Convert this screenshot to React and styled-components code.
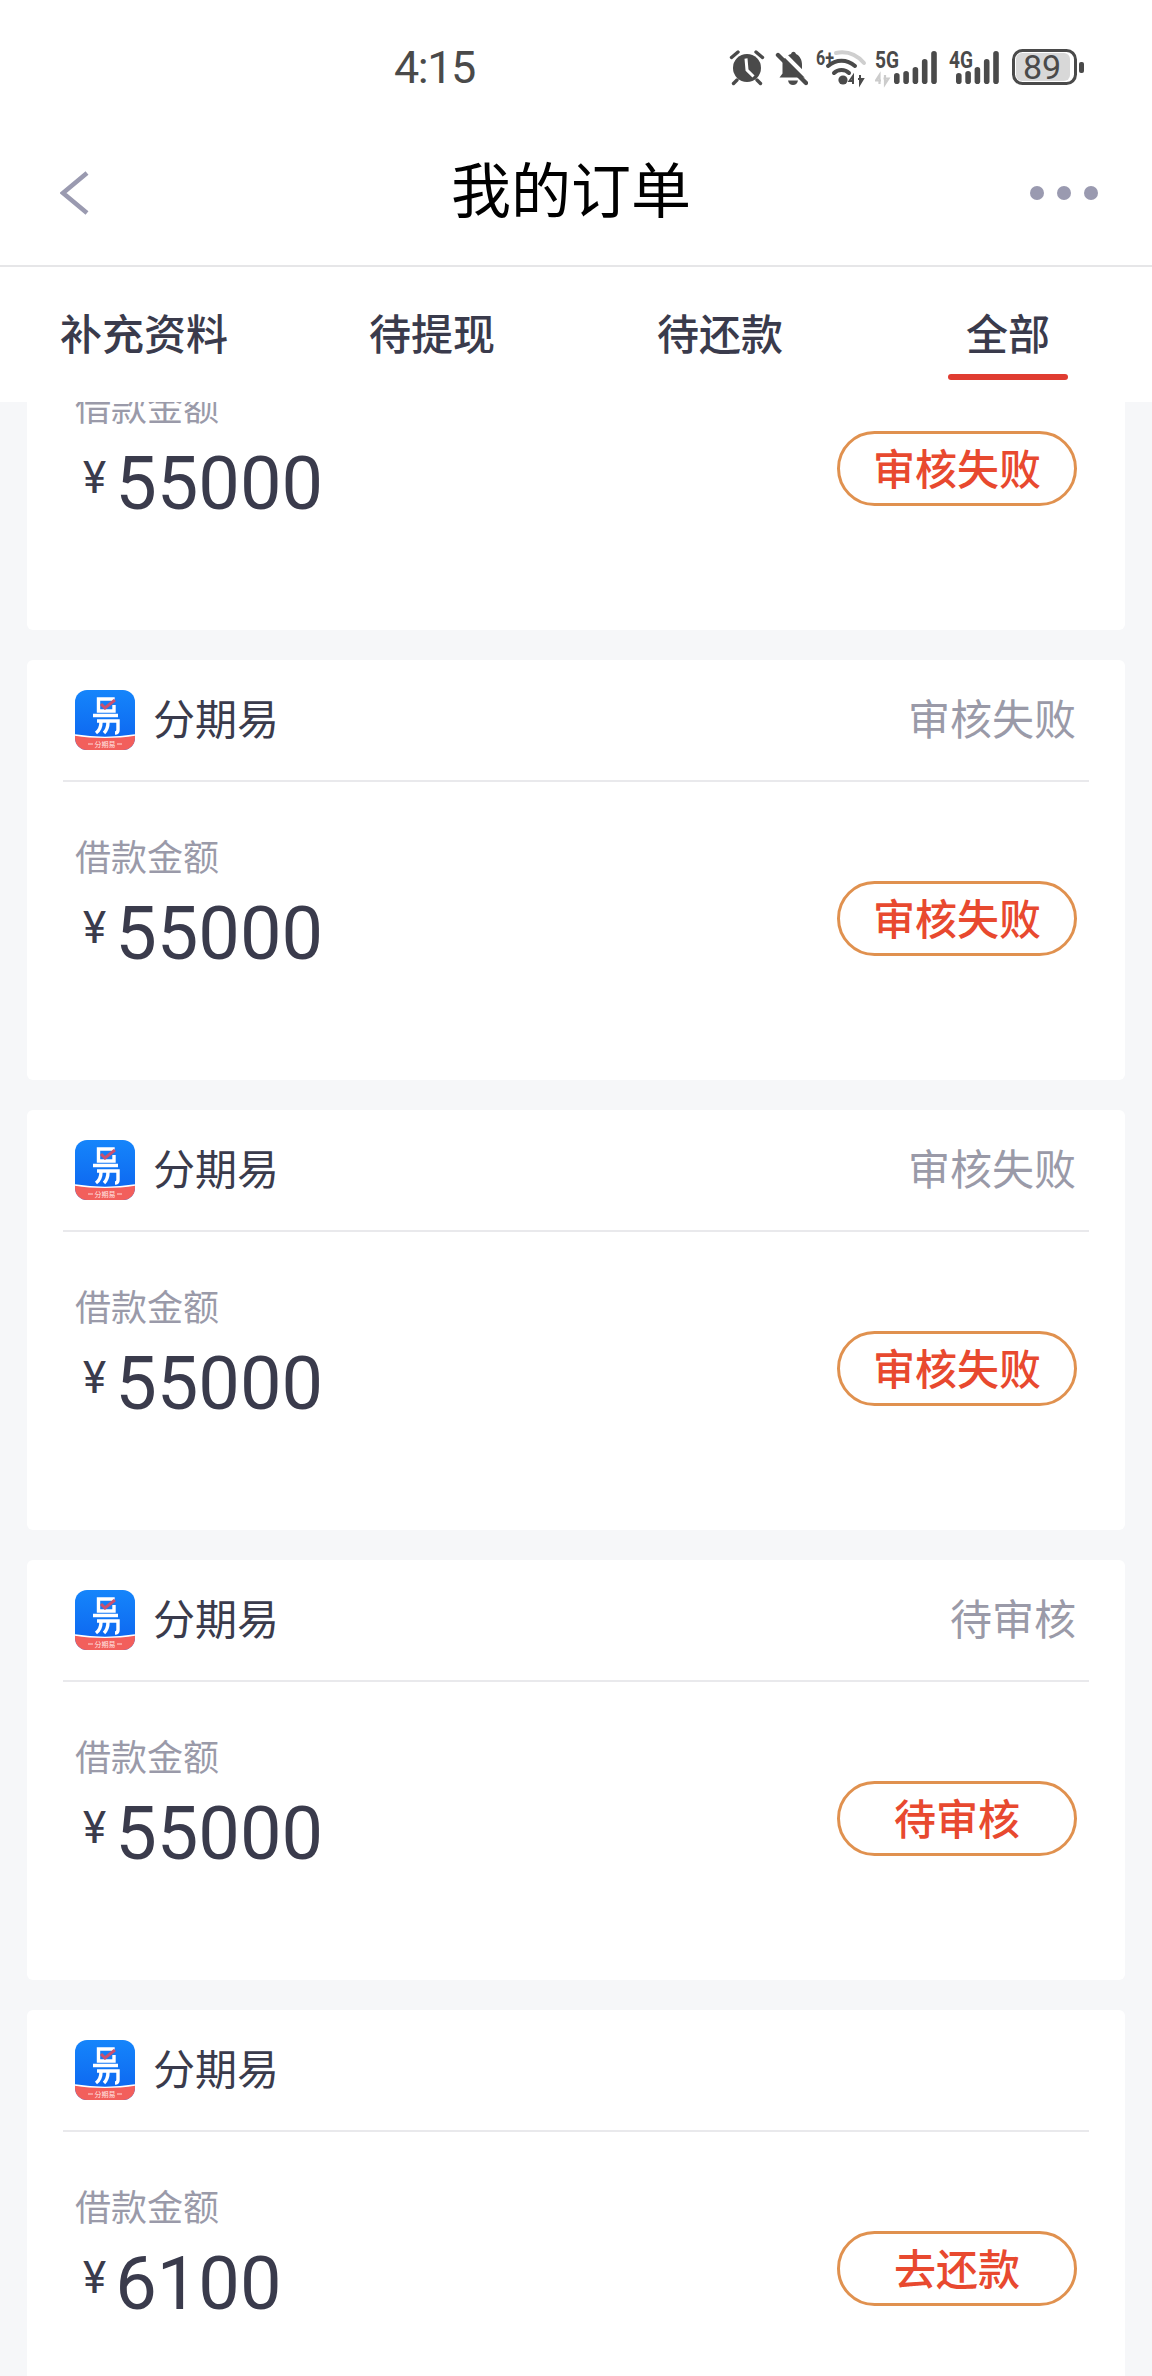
import React from 'react';
import styled, { createGlobalStyle } from 'styled-components';

const GlobalStyle = createGlobalStyle`
  html, body {
    margin: 0;
    padding: 0;
    background: #f6f7f9;
  }
  * {
    box-sizing: border-box;
  }
`;

const CJK = `Roboto, "Noto Sans CJK SC", sans-serif`;

const orders = [
  { id: 1, state: '审核失败', action: '审核失败', amount: '55000' },
  { id: 2, state: '审核失败', action: '审核失败', amount: '55000' },
  { id: 3, state: '审核失败', action: '审核失败', amount: '55000' },
  { id: 4, state: '待审核', action: '待审核', amount: '55000' },
  { id: 5, state: '', action: '去还款', amount: '6100' },
];

const tabs = ['补充资料', '待提现', '待还款', '全部'];

// status icons share a 44px tall box, drawn from y = -4 so the small labels keep some room
const AlarmIcon = () => (
  <svg width="37" height="44" viewBox="0 -4 37 44">
    <circle cx="18" cy="19" r="14" fill="#4a4a4a" />
    <g stroke="#4a4a4a" strokeWidth="3.4" strokeLinecap="round">
      <path d="M2.5 8.5 9 3M27 3l6.5 5.5M8 31l-3.5 3.5M28 31l3.5 3.5" />
    </g>
    <path d="M17 9.5 18 21l6.5 6.5" fill="none" stroke="#fff" strokeWidth="3" />
  </svg>
);

const BellOffIcon = () => (
  <svg width="34" height="44" viewBox="0 -4 34 44">
    <path d="M17 5c1-3 4-3 5 0 4 2 6 6 6 11v7l3 5.5H5.500l3-4V15c0-4 3-8 8.500-10z" fill="#4a4a4a" />
    <path d="M14 31.500h10c-.6 3-2.500 4.500-5 4.500s-4.400-1.500-5-4.500z" fill="#4a4a4a" />
    <path d="M7 2 35 30" stroke="#fff" strokeWidth="4" />
    <path d="M4 6l28 28" stroke="#4a4a4a" strokeWidth="4.400" strokeLinecap="round" />
  </svg>
);

const WifiIcon = () => (
  <svg width="51" height="44" viewBox="0 -4 51 44">
    <text x="0" y="16" fontFamily="Roboto, sans-serif" fontSize="21" fontWeight="700" fill="#4a4a4a" textLength="18" lengthAdjust="spacingAndGlyphs">6+</text>
    <path d="M20 4c10-2 20 1 28 10" fill="none" stroke="#cfcfcf" strokeWidth="4" strokeLinecap="round" />
    <path d="M12 17c8-7 19-7 27 0" fill="none" stroke="#4a4a4a" strokeWidth="4" strokeLinecap="round" />
    <path d="M18 24c4-4 11-4 15 0" fill="none" stroke="#4a4a4a" strokeWidth="4" strokeLinecap="round" />
    <circle cx="27" cy="31" r="4.600" fill="#4a4a4a" />
    <path d="M37 35v-8l-3.500 5h4.500M44 26v9l3-5h-5" fill="none" stroke="#4a4a4a" strokeWidth="2" />
  </svg>
);

const SignalIcon = ({ label, width, labelX, barX, withArrows }) => {
  const tops = [24, 22, 18, 10, 2];
  return (
    <svg width={width} height="44" viewBox={`0 -4 ${width} 44`}>
      <text x={labelX} y="19" fontFamily="Roboto, sans-serif" fontSize="24" fontWeight="700" fill="#4a4a4a" textLength="24" lengthAdjust="spacingAndGlyphs">{label}</text>
      {withArrows && (
        <path d="M4.500 35V26l-3.500 5.500h5M10 26v9l3.500-5.500h-5" fill="none" stroke="#cccccc" strokeWidth="2.200" />
      )}
      {tops.map((top, i) => (
        <rect key={i} x={barX + i * 9.3} y={top} width="5.600" height={35 - top} rx="2.800" fill="#4a4a4a" />
      ))}
    </svg>
  );
};

const BatteryIcon = ({ level }) => (
  <svg width="75" height="44" viewBox="0 -4 75 44">
    <rect x="4.500" y="1.500" width="62" height="33" rx="9" fill="#fff" stroke="#4a4a4a" strokeWidth="3" />
    <rect x="7" y="4" width="54" height="28" rx="6" fill="#d8d8d8" />
    <rect x="70" y="13" width="5" height="11" rx="2" fill="#4a4a4a" />
    <text x="33" y="29.500" textAnchor="middle" fontFamily="Roboto, sans-serif" fontSize="34" fill="#4a4a4a">{level}</text>
  </svg>
);

const AppLogo = () => (
  <svg width="60" height="60" viewBox="0 0 60 60">
    <defs>
      <linearGradient id="logoBlue" x1="0" y1="0" x2="0" y2="1">
        <stop offset="0" stopColor="#1585fb" />
        <stop offset="1" stopColor="#0c62ee" />
      </linearGradient>
      <clipPath id="logoClip">
        <rect width="60" height="60" rx="12" />
      </clipPath>
    </defs>
    <g clipPath="url(#logoClip)">
      <rect width="60" height="60" fill="url(#logoBlue)" />
      <path d="M0 45c18 3 42 3 60 0v15H0z" fill="#f25f5c" />
      <path d="M0 45c18 3 42 3 60 0" fill="none" stroke="#fff" strokeWidth="1.600" />
    </g>
    <path d="M38 11v-2H23.500v12H39v-6M18 25.500h25" fill="none" stroke="#fff" strokeWidth="3.400" />
    <path d="M26 14l4 4 10-8" fill="none" stroke="#c9516f" strokeWidth="3" />
    <path d="M22 31h21v9c0 2-1 3-3 3M26 32c0 4-1 8-5 11M33 32c0 4-1 8-4 11" fill="none" stroke="#fff" strokeWidth="3.400" />
    <path d="M13 54h5M42 54h5" stroke="#ffd9d6" strokeWidth="1" />
    <text x="30" y="56.500" textAnchor="middle" fontFamily={CJK} fontSize="7" fill="#ffe3e0">分期易</text>
  </svg>
);

const Page = styled.div`
  width: 1152px;
  height: 2376px;
  overflow: hidden;
  display: flex;
  flex-direction: column;
  background: #f6f7f9;
  font-family: ${CJK};
`;

const StatusBar = styled.div`
  height: 120px;
  flex: none;
  display: flex;
  justify-content: space-between;
  align-items: flex-start;
  padding: 45px 68px 0 394px;
  background: #fff;
`;

const Clock = styled.span`
  margin-top: 4px;
  font-size: 45px;
  line-height: 38px;
  letter-spacing: -1.5px;
  color: #4a4a4a;
`;

const StatusIcons = styled.div`
  display: flex;
  gap: 8px;
`;

const NavBar = styled.header`
  height: 147px;
  flex: none;
  display: flex;
  align-items: center;
  justify-content: space-between;
  padding: 0 54px 0 60px;
  background: #fff;
  border-bottom: 2px solid #e6e6e8;
`;

const BackIcon = styled.svg`
  width: 30px;
  height: 44px;
  margin-right: 22px;
`;

const NavTitle = styled.h1`
  margin: 0;
  font-size: 60px;
  line-height: 1;
  font-weight: 400;
  color: #000;
`;

const MoreDots = styled.div`
  display: flex;
  gap: 13px;
`;

const Dot = styled.span`
  width: 14px;
  height: 14px;
  border-radius: 50%;
  background: #9a9ab0;
`;

const TabRow = styled.nav`
  height: 135px;
  flex: none;
  display: grid;
  grid-template-columns: repeat(4, 1fr);
  background: #fff;
`;

const Tab = styled.div`
  position: relative;
  display: flex;
  align-items: center;
  justify-content: center;
  padding-bottom: 6px;
  font-size: 42px;
  font-weight: 500;
  color: #3a3b4c;

  &::after {
    content: '';
    display: ${({ $active }) => ($active ? 'block' : 'none')};
    position: absolute;
    left: 50%;
    bottom: 22px;
    width: 120px;
    height: 6px;
    margin-left: -60px;
    border-radius: 3px;
    background: #e03c31;
  }
`;

const OrderViewport = styled.main`
  flex: 1;
  overflow: hidden;
`;

const OrderList = styled.div`
  display: flex;
  flex-direction: column;
  gap: 30px;
  margin-top: -192px;
  padding: 0 27px;
`;

const OrderCard = styled.article`
  height: 420px;
  flex: none;
  background: #fff;
  border-radius: 6px;
`;

const CardHead = styled.div`
  height: 122px;
  margin: 0 36px;
  padding: 0 13px 0 12px;
  display: flex;
  align-items: center;
  justify-content: space-between;
  border-bottom: 2px solid #e9e9ec;
`;

const Brand = styled.div`
  display: flex;
  align-items: center;
  gap: 18px;
`;

const BrandName = styled.span`
  padding-bottom: 8px;
  font-size: 42px;
  color: #3a3b4c;
`;

const StateText = styled.span`
  padding-bottom: 8px;
  font-size: 42px;
  color: #9a9aa8;
`;

const CardBody = styled.div`
  display: flex;
  justify-content: space-between;
  align-items: flex-start;
  padding: 59px 48px 0;
`;

const AmountLabel = styled.div`
  font-size: 36px;
  line-height: 36px;
  color: #9a9aa9;
`;

const AmountRow = styled.div`
  display: flex;
  align-items: flex-start;
  gap: 9px;
  margin-top: 21px;
  padding-left: 8px;
  color: #3a3b4c;
`;

const Currency = styled.span`
  margin-top: 8px;
  font-size: 44px;
  line-height: 44px;
`;

const AmountValue = styled.span`
  font-size: 74px;
  line-height: 72px;
`;

const ActionButton = styled.button`
  width: 240px;
  height: 75px;
  margin-top: 40px;
  padding: 0 0 5px;
  border: 3px solid #e0914f;
  border-radius: 38px;
  background: #fff;
  font-family: inherit;
  font-size: 42px;
  font-weight: 500;
  color: #e8492f;
`;

const App = () => {
  return (
    <Page>
      <GlobalStyle />
      <StatusBar>
        <Clock>4:15</Clock>
        <StatusIcons>
          <AlarmIcon />
          <BellOffIcon />
          <WifiIcon />
          <SignalIcon label="5G" width={64} labelX={0} barX={19} withArrows />
          <SignalIcon label="4G" width={54} labelX={2} barX={9} />
          <BatteryIcon level="89" />
        </StatusIcons>
      </StatusBar>
      <NavBar>
        <BackIcon viewBox="0 0 30 44">
          <path d="M27 2 3 22l24 20" fill="none" stroke="#9a9ab0" strokeWidth="4.500" />
        </BackIcon>
        <NavTitle>我的订单</NavTitle>
        <MoreDots>
          <Dot />
          <Dot />
          <Dot />
        </MoreDots>
      </NavBar>
      <TabRow>
        {tabs.map((tab, i) => (
          <Tab key={tab} $active={i === tabs.length - 1}>{tab}</Tab>
        ))}
      </TabRow>
      <OrderViewport>
        <OrderList>
          {orders.map((order) => (
            <OrderCard key={order.id}>
              <CardHead>
                <Brand>
                  <AppLogo />
                  <BrandName>分期易</BrandName>
                </Brand>
                <StateText>{order.state}</StateText>
              </CardHead>
              <CardBody>
                <div>
                  <AmountLabel>借款金额</AmountLabel>
                  <AmountRow>
                    <Currency>¥</Currency>
                    <AmountValue>{order.amount}</AmountValue>
                  </AmountRow>
                </div>
                <ActionButton>{order.action}</ActionButton>
              </CardBody>
            </OrderCard>
          ))}
        </OrderList>
      </OrderViewport>
    </Page>
  );
};

export default App;
